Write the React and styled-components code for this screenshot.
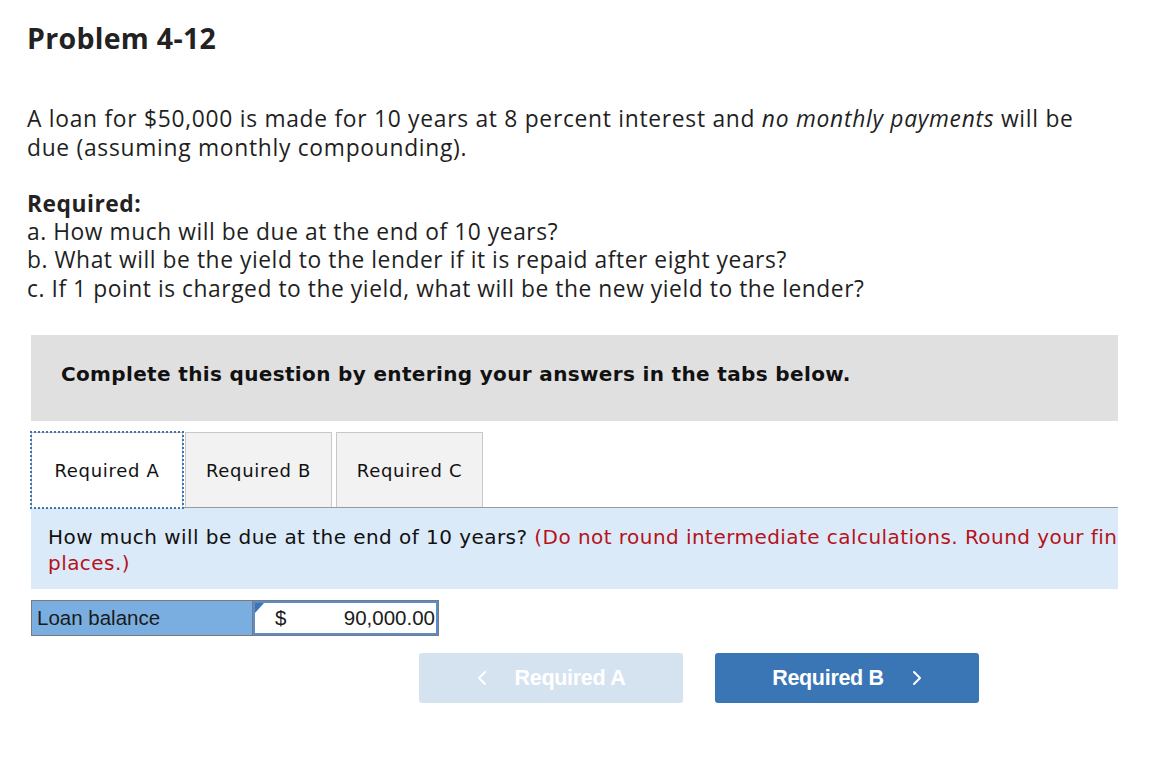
import React from "react";
import styled, { createGlobalStyle } from "styled-components";

const Global = createGlobalStyle`
  body {
    margin: 0;
    background: #fff;
    color: #1a1a1a;
    font-family: "Open Sans", "Liberation Sans", sans-serif;
  }
`;

const Page = styled.div`
  width: 1156px;
  padding: 20px 0 0 27px;
  box-sizing: border-box;
  overflow: hidden;
`;

const Title = styled.h1`
  margin: 0;
  font-size: 28.5px;
  font-weight: 700;
  letter-spacing: 0.3px;
  line-height: 36px;
  color: #222;
`;

const Para = styled.p`
  margin: 48px 0 0;
  width: 1062px;
  font-size: 22.8px;
  letter-spacing: 0.72px;
  line-height: 29px;
  color: #1f1f1f;
`;

const Label = styled.div`
  margin-top: 27px;
  font-size: 22.8px;
  letter-spacing: 0.5px;
  line-height: 29px;
  font-weight: 700;
  color: #222;
`;

const Line = styled.div`
  font-size: 22.8px;
  letter-spacing: 0.55px;
  line-height: 28.4px;
  color: #1f1f1f;
`;

const Work = styled.div`
  margin: 32px 0 0 4px;
  width: 1087px;
  font-family: "DejaVu Sans", Verdana, sans-serif;
`;

const Banner = styled.div`
  height: 86px;
  box-sizing: border-box;
  padding: 0 0 9px 30px;
  background: #e0e0e0;
  display: flex;
  align-items: center;
  font-size: 20px;
  letter-spacing: 0.35px;
  font-weight: 700;
  color: #111;
`;

const TabRow = styled.div`
  display: flex;
  margin-top: 11px;
`;

const Tab = styled.div`
  width: ${(p) => p.$w}px;
  margin-right: ${(p) => p.$gap || 0}px;
  height: ${(p) => (p.$active ? 76 : 75)}px;
  margin-bottom: ${(p) => (p.$active ? "-1px" : "0")};
  box-sizing: border-box;
  display: flex;
  align-items: center;
  justify-content: center;
  font-size: 18px;
  letter-spacing: 0.7px;
  color: #111;
  background: ${(p) => (p.$active ? "#fff" : "#f2f2f2")};
  border: 1px solid #c8c8c8;
  border-bottom: none;
  outline: ${(p) => (p.$active ? "2px dotted #3a76b6" : "none")};
  outline-offset: -1px;
  position: relative;
  z-index: ${(p) => (p.$active ? 2 : 0)};
`;

const Panel = styled.div`
  border-top: 1px solid #9a9a9a;
  background: #dbeaf8;
  height: 82px;
  overflow: hidden;
  box-sizing: border-box;
  padding: 16px 0 0 17px;
`;

const Prompt = styled.div`
  width: 1385px;
  font-size: 20px;
  letter-spacing: 0.45px;
  line-height: 26px;
  color: #111;
`;

const Note = styled.span`
  color: #b5121b;
`;

const AnswerRow = styled.div`
  display: flex;
  margin-top: 11px;
  font-family: "Liberation Sans", Arial, sans-serif;
`;

const Cell = styled.div`
  height: 36px;
  box-sizing: border-box;
  border: 1px solid #7a7a7a;
  display: flex;
  align-items: center;
`;

const LabelCell = styled(Cell)`
  width: 222px;
  background: #7aaee1;
  padding-left: 5px;
  font-size: 20.5px;
  color: #1b1b1b;
`;

const InputCell = styled(Cell)`
  width: 186px;
  border-left: none;
  background: #fff;
  position: relative;
`;

const Flag = styled.span`
  position: absolute;
  left: 2px;
  top: 2px;
  width: 0;
  height: 0;
  border-top: 10px solid #3a76b6;
  border-right: 9px solid transparent;
`;

const Input = styled.div`
  flex: 1;
  height: 100%;
  box-sizing: border-box;
  border: 2px solid #5b8ccb;
  display: flex;
  align-items: center;
  justify-content: space-between;
  padding: 0 1px 0 20px;
  font-size: 20.5px;
  color: #1b1b1b;
`;

const NavRow = styled.div`
  display: flex;
  gap: 32px;
  margin: 17px 0 0 388px;
  font-family: "Liberation Sans", Arial, sans-serif;
`;

const NavButton = styled.div`
  width: 264px;
  height: 50px;
  border-radius: 3px;
  display: flex;
  align-items: center;
  justify-content: center;
  gap: 28px;
  font-size: 21.5px;
  font-weight: 700;
  letter-spacing: -0.3px;
  color: #fff;
  background: ${(p) => (p.$disabled ? "#d5e3f1" : "#3a76b6")};
`;

const Chevron = ({ dir }) => (
  <svg width="10" height="16" viewBox="0 0 10 16" fill="none">
    <path
      d={dir === "left" ? "M8 2 L2 8 L8 14" : "M2 2 L8 8 L2 14"}
      stroke="#fff"
      strokeWidth="2"
      strokeLinecap="round"
      strokeLinejoin="round"
    />
  </svg>
);

export default function App() {
  return (
    <Page>
      <Global />
      <Title>Problem 4-12</Title>
      <Para>
        A loan for $50,000 is made for 10 years at 8 percent interest and <em>no monthly payments</em> will be due
        (assuming monthly compounding).
      </Para>
      <Label>Required:</Label>
      <Line>a. How much will be due at the end of 10 years?</Line>
      <Line>b. What will be the yield to the lender if it is repaid after eight years?</Line>
      <Line>c. If 1 point is charged to the yield, what will be the new yield to the lender?</Line>

      <Work>
        <Banner>Complete this question by entering your answers in the tabs below.</Banner>
        <TabRow>
          <Tab $active $w={152} $gap={2}>Required A</Tab>
          <Tab $w={147} $gap={4}>Required B</Tab>
          <Tab $w={147}>Required C</Tab>
        </TabRow>
        <Panel>
          <Prompt>
            How much will be due at the end of 10 years?{" "}
            <Note>(Do not round intermediate calculations. Round your final answer to 2 decimal places.)</Note>
          </Prompt>
        </Panel>
        <AnswerRow>
          <LabelCell>Loan balance</LabelCell>
          <InputCell>
            <Flag />
            <Input>
              <span>$</span>
              <span>90,000.00</span>
            </Input>
          </InputCell>
        </AnswerRow>
        <NavRow>
          <NavButton $disabled>
            <Chevron dir="left" />
            Required A
          </NavButton>
          <NavButton>
            Required B
            <Chevron dir="right" />
          </NavButton>
        </NavRow>
      </Work>
    </Page>
  );
}
